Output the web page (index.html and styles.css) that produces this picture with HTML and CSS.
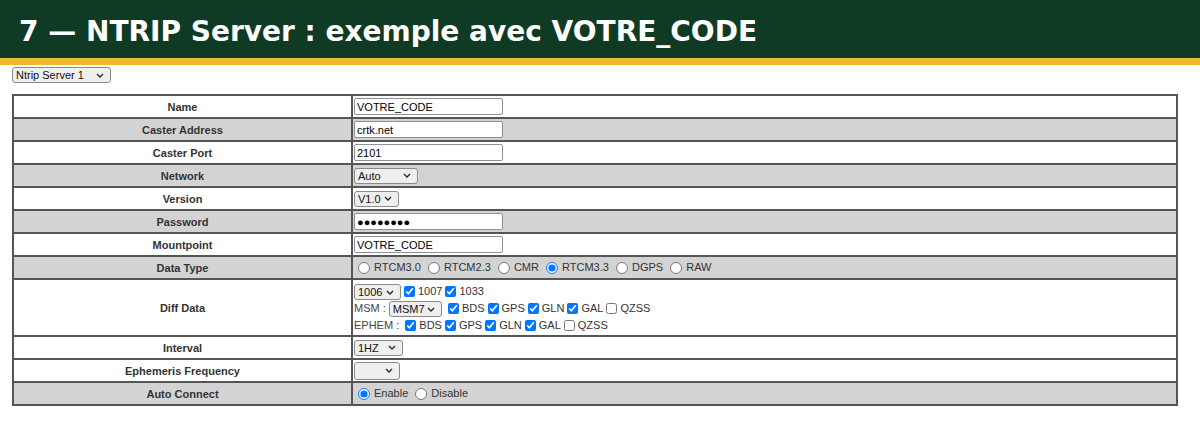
FILE: index.html
```html
<!DOCTYPE html>
<html lang="fr">
<head>
<meta charset="utf-8">
<title>NTRIP Server</title>
<link rel="stylesheet" href="styles.css">
</head>
<body>
<header class="banner">
  <h1 class="title">7 — NTRIP Server : exemple avec VOTRE_CODE</h1>
</header>
<main class="content">
  <div class="server-pick">
    <select class="sel sel-server"><option>Ntrip Server 1</option></select>
  </div>
  <table class="cfg">
    <tr><th>Name</th><td><input class="txt" type="text" value="VOTRE_CODE"></td></tr>
    <tr class="alt"><th>Caster Address</th><td><input class="txt" type="text" value="crtk.net"></td></tr>
    <tr><th>Caster Port</th><td><input class="txt" type="text" value="2101"></td></tr>
    <tr class="alt"><th>Network</th><td><select class="sel sel-net"><option>Auto</option></select></td></tr>
    <tr><th>Version</th><td><select class="sel sel-ver"><option>V1.0</option></select></td></tr>
    <tr class="alt"><th>Password</th><td><input class="txt pwd" type="text" value="●●●●●●●●"></td></tr>
    <tr><th>Mountpoint</th><td><input class="txt" type="text" value="VOTRE_CODE"></td></tr>
    <tr class="alt"><th>Data Type</th><td class="opts">
      <label><input type="radio" name="dt">RTCM3.0</label>
      <label><input type="radio" name="dt">RTCM2.3</label>
      <label><input type="radio" name="dt">CMR</label>
      <label><input type="radio" name="dt" checked>RTCM3.3</label>
      <label><input type="radio" name="dt">DGPS</label>
      <label><input type="radio" name="dt">RAW</label>
    </td></tr>
    <tr class="tall"><th>Diff Data</th><td class="opts diff">
      <div class="line"><select class="sel sel-1006"><option>1006</option></select><label><input type="checkbox" checked>1007</label><label><input type="checkbox" checked>1033</label></div>
      <div class="line"><span class="lbl">MSM :</span> <select class="sel sel-msm"><option>MSM7</option></select> <label><input type="checkbox" checked>BDS</label><label><input type="checkbox" checked>GPS</label><label><input type="checkbox" checked>GLN</label><label><input type="checkbox" checked>GAL</label><label><input type="checkbox">QZSS</label></div>
      <div class="line"><span class="lbl">EPHEM :</span> <label><input type="checkbox" checked>BDS</label><label><input type="checkbox" checked>GPS</label><label><input type="checkbox" checked>GLN</label><label><input type="checkbox" checked>GAL</label><label><input type="checkbox">QZSS</label></div>
    </td></tr>
    <tr><th>Interval</th><td><select class="sel sel-int"><option>1HZ</option></select></td></tr>
    <tr><th>Ephemeris Frequency</th><td><select class="sel sel-eph"><option></option></select></td></tr>
    <tr class="alt"><th>Auto Connect</th><td class="opts">
      <label><input type="radio" name="ac" checked>Enable</label>
      <label><input type="radio" name="ac">Disable</label>
    </td></tr>
  </table>
</main>
</body>
</html>
```
FILE: styles.css
```css
html, body {
  margin: 0;
  padding: 0;
  background: #ffffff;
}
body {
  font-family: "Liberation Sans", Arial, sans-serif;
  font-size: 11px;
  color: #333;
}
.banner {
  background: #0f3b24;
  border-bottom: 7px solid #efb92f;
  height: 58px;
  display: flex;
  align-items: center;
}
.title {
  margin: 0;
  padding: 4px 0 0 19px;
  font-family: "DejaVu Sans", sans-serif;
  font-weight: bold;
  font-size: 28px;
  color: #ffffff;
}
.content {
  padding: 2px 12px 0;
}
.server-pick {
  height: 16px;
  margin-bottom: 11px;
}
.sel {
  -webkit-appearance: none;
  appearance: none;
  box-sizing: border-box;
  font-family: "Liberation Sans", Arial, sans-serif;
  font-size: 11px;
  height: 16px;
  margin: 0;
  padding: 0 14px 0 3px;
  color: #111;
  border: 1px solid #8a8a8a;
  border-radius: 3px;
  background-color: #efefef;
  background-image: url("data:image/svg+xml;utf8,<svg xmlns='http://www.w3.org/2000/svg' width='8' height='5' viewBox='0 0 8 5'><path d='M1 1 L4 4 L7 1' fill='none' stroke='%23222' stroke-width='1.3'/></svg>");
  background-repeat: no-repeat;
  background-position: right 6px center;
  vertical-align: middle;
}
.sel-server { width: 99px; }
.sel-net { width: 64px; }
.sel-ver { width: 45px; }
.sel-1006 { width: 47px; }
.sel-msm { width: 53px; }
.sel-int { width: 49px; }
.sel-eph { width: 46px; height: 18px; }
.cfg {
  width: 1166px;
  border-collapse: separate;
  border-spacing: 0;
  border: 1px solid #555;
}
.cfg th, .cfg td {
  border: 1px solid #555;
  height: 19px;
  padding: 1px;
  vertical-align: middle;
}
.cfg th {
  width: 335px;
  text-align: center;
  font-weight: bold;
  color: #333;
  font-size: 11px;
}
.cfg td {
  text-align: left;
  color: #333;
}
.cfg tr.alt th, .cfg tr.alt td {
  background: #d3d3d3;
}
.cfg tr.tall th {
  height: 53px;
}
.cfg td.diff {
  padding-top: 2px;
  padding-bottom: 0;
  height: 53px;
  box-sizing: border-box;
}
.txt {
  box-sizing: border-box;
  width: 149px;
  height: 17px;
  margin: 0;
  padding: 0 2px;
  font-family: "Liberation Sans", Arial, sans-serif;
  font-size: 11px;
  color: #000;
  background: #fff;
  border: 1px solid #8f8f9d;
  border-radius: 2px;
  vertical-align: middle;
}
.opts label {
  white-space: nowrap;
}
.opts input[type="radio"] {
  width: 12px;
  height: 12px;
  margin: -2px 4px 0 4px;
  vertical-align: middle;
}
.opts input[type="checkbox"] {
  width: 11px;
  height: 11px;
  margin: -2px 3px 0 3px;
  vertical-align: middle;
}
.opts .line {
  height: 17px;
  line-height: 17px;
  white-space: nowrap;
}
.lbl {
  color: #444;
}
```
